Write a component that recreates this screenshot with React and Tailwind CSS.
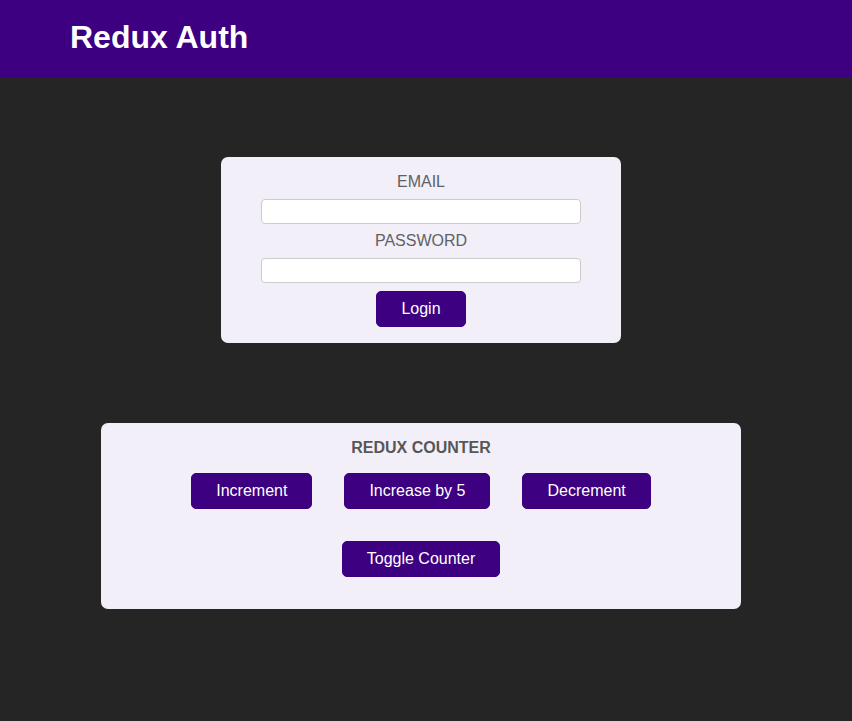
export default function App() {
  const btn =
    'bg-[#3c0080] border border-[#3c0080] text-white rounded-[5px] px-6 py-2 text-base leading-[18px] cursor-pointer';

  return (
    <div className="min-h-[721px] bg-[#252525] font-['Liberation_Sans',Arial,sans-serif]">
      {/* Header */}
      <header className="h-[77px] bg-[#3c0080] flex items-center pl-[70px] pb-[4px]">
        <h1 className="text-[32px] font-bold text-white leading-none">Redux Auth</h1>
      </header>

      {/* Auth form */}
      <main className="w-[842px]">
        <section className="w-[400px] mx-auto mt-[80px] bg-[#f2eff9] rounded-[7px] p-4 text-center">
          <form onSubmit={(e) => e.preventDefault()}>
            <div className="mb-2">
              <label htmlFor="email" className="block mb-2 text-[#616161] text-base leading-[18px]">
                EMAIL
              </label>
              <input
                id="email"
                type="email"
                className="block mx-auto w-[320px] h-[25px] bg-white border border-[#ccc] rounded-[4px] px-1 text-[13px]"
              />
            </div>
            <div className="mb-2">
              <label htmlFor="password" className="block mb-2 text-[#616161] text-base leading-[18px]">
                PASSWORD
              </label>
              <input
                id="password"
                type="password"
                className="block mx-auto w-[320px] h-[25px] bg-white border border-[#ccc] rounded-[4px] px-1 text-[13px]"
              />
            </div>
            <button className={btn}>Login</button>
          </form>
        </section>

        {/* Counter */}
        <section className="w-[640px] mx-auto mt-[80px] bg-[#f2eff9] rounded-[7px] pt-4 pb-8 text-center">
          <h2 className="text-base leading-[18px] font-bold text-[#575757] uppercase">Redux Counter</h2>
          <div className="flex justify-center gap-8 mt-4">
            <button className={btn}>Increment</button>
            <button className={btn}>Increase by 5</button>
            <button className={btn}>Decrement</button>
          </div>
          <div className="mt-8">
            <button className={btn}>Toggle Counter</button>
          </div>
        </section>
      </main>
    </div>
  );
}
